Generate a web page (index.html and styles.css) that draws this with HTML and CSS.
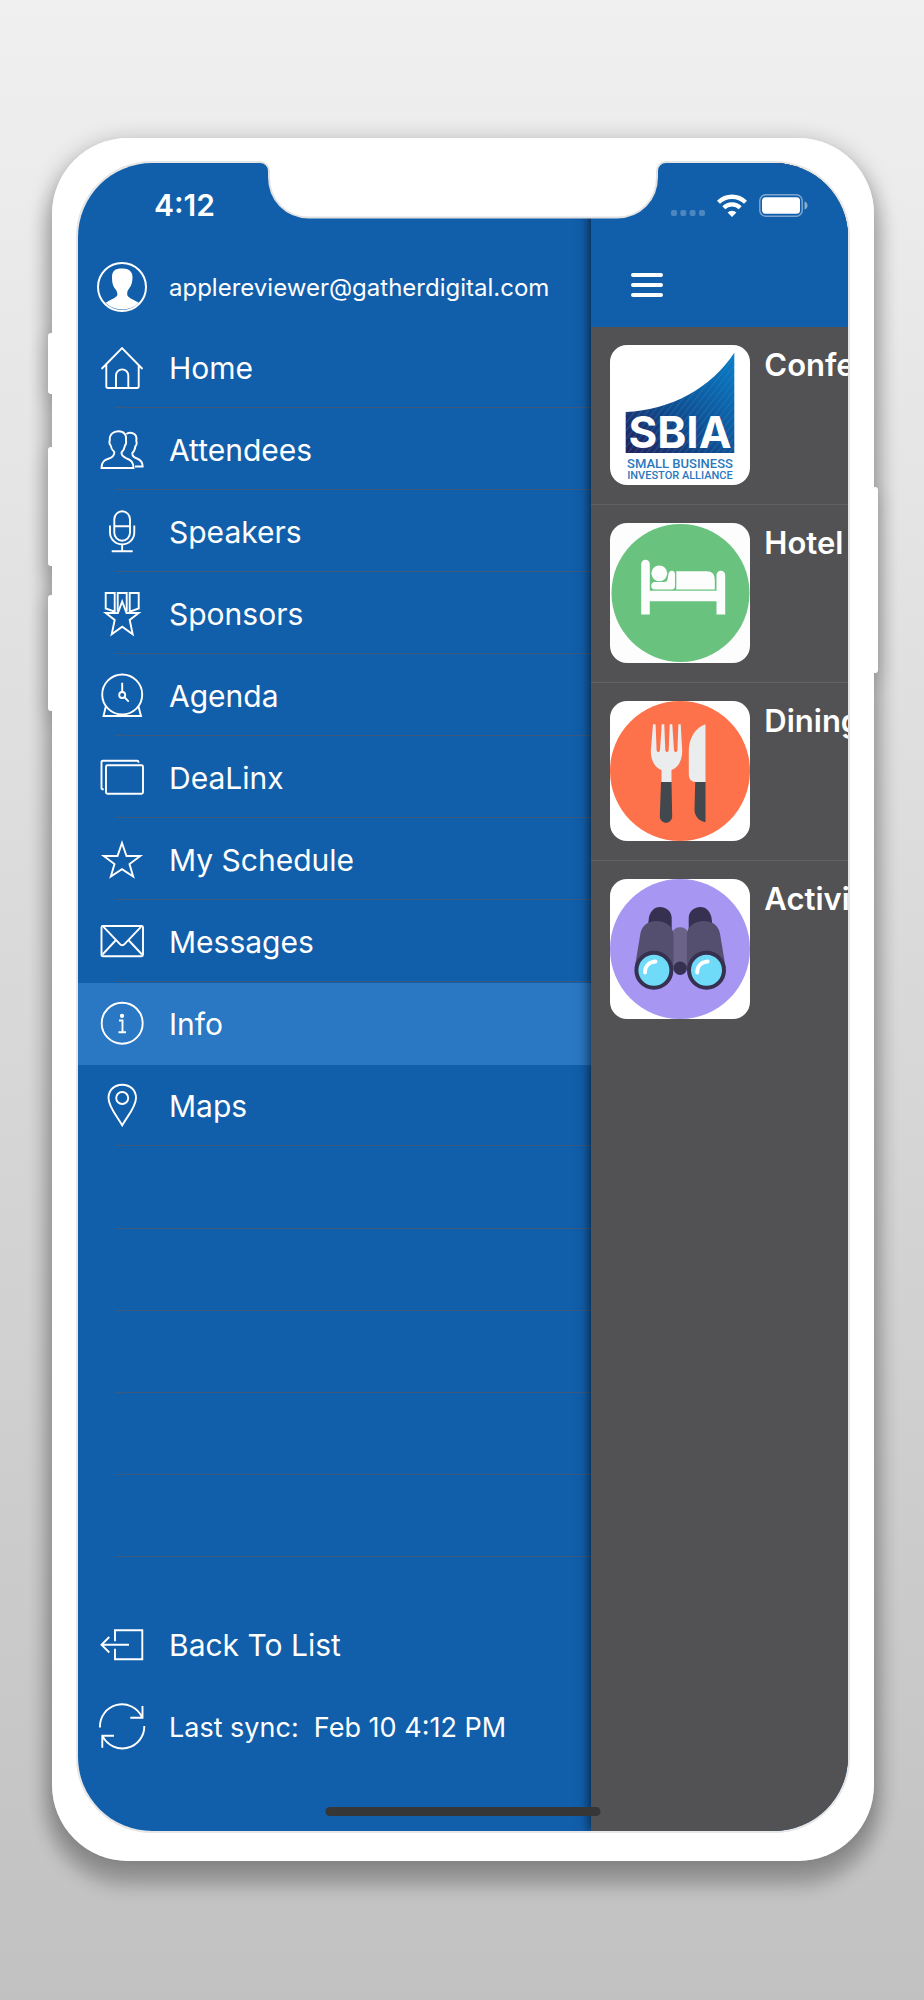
FILE: index.html
```html
<!DOCTYPE html>
<html lang="en">
<head>
<meta charset="utf-8">
<meta name="viewport" content="width=device-width, initial-scale=1">
<title>Info</title>
<link rel="stylesheet" href="styles.css">
</head>
<body>
<div class="device">
  <span class="side-key key-mute"></span>
  <span class="side-key key-up"></span>
  <span class="side-key key-down"></span>
  <span class="side-key key-power"></span>
  <div class="shell">
    <div class="bezel">
      <div class="screen">
        <div class="drawer">
          <div class="clock"><time>4:12</time></div>
          <div class="account">
            <svg class="avatar" viewBox="0 0 50 50" aria-hidden="true">
              <circle cx="25" cy="25" r="24" fill="none" stroke="#fff" stroke-width="2"/>
              <path fill="#fff" d="M25 6.500C31 6 35.500 9 35.500 15C35.500 20 34.500 23 32.500 26C30.500 28.500 30 30 30.300 33C31 35.500 35 37 42 40.700A24 24 0 0 1 8.500 40.700C15 37 19.500 35.500 20.300 33C20.600 30 19.500 28.500 17.500 26C15.500 23 15 20 15 15C15 9 18 6.500 25 6.500Z"/>
            </svg>
            <span class="email">applereviewer@gatherdigital.com</span>
          </div>
          <nav aria-label="Main">
            <ul class="menu">
              <li><a class="item" href="#home"><svg class="icon" viewBox="0 0 44 44" aria-hidden="true"><path d="M1.500 23L22 2L42.500 23M6.300 18.500V40.500Q6.300 42 8 42H37Q38.700 42 38.700 40.500V18.500M16 42V29.500A6.150 6.150 0 0 1 28.300 29.500V42"/></svg>Home</a></li>
              <li><a class="item" href="#attendees"><svg class="icon" viewBox="0 0 44 44" aria-hidden="true"><path d="M1.500 40C1.500 33 5 32 9.500 30.300C13 29 14.500 27 14.300 24C12 22 11 20 10.700 17.500C9.500 16 9 14 9.800 12C9.300 6.500 13 3.300 18.500 3.300C24 3.300 27 7 25.900 12C26.500 14.500 26 16.500 25 17.500C24.500 20.500 23.500 22.500 21.500 24.500C21.300 27.500 23.500 29 26.500 30.300C31 32 33.500 34 33.500 40Z"/><path d="M26.300 6C28 4.500 30 4.500 32 5C36 6 37 9 36.300 13C37 15 36.500 17 35.500 18C35 21 34 23.500 32.300 25C32 28 34 29.500 37 30.500C41 32 42.700 34 42.700 38.500H35"/></svg>Attendees</a></li>
              <li><a class="item" href="#speakers"><svg class="icon" viewBox="0 0 44 44" aria-hidden="true"><rect x="14.300" y="1.300" width="15.700" height="29.400" rx="7.850"/><path d="M14.300 16.300H30M10 15.500V22.500A12.150 11.850 0 0 0 34.300 22.500V15.500M22.150 34.400V41.300M11.700 41.300H32.700"/></svg>Speakers</a></li>
              <li><a class="item" href="#sponsors"><svg class="icon" viewBox="0 0 44 44" aria-hidden="true"><path d="M5.700 1H14.700V19.700L5.700 16.500ZM17.700 19.500V1H26.700V19.500M29.700 1H38.700V16.500L29.700 19.700Z"/><path d="M22.200 9.500L26.500 21H38.700L29.700 28L32.700 42.300L22.200 34.700L11.700 42.300L14.700 28L5.700 21H17.900Z"/></svg>Sponsors</a></li>
              <li><a class="item" href="#agenda"><svg class="icon" viewBox="0 0 44 44" aria-hidden="true"><circle cx="22.200" cy="20.500" r="20"/><circle cx="22.200" cy="21" r="3"/><path d="M22.200 8.700V18M24.400 23.200L28.700 27.700M5.800 32.500L3.500 42H41L38.500 32.500"/></svg>Agenda</a></li>
              <li><a class="item" href="#dealinx"><svg class="icon" viewBox="0 0 44 44" aria-hidden="true"><rect x="6" y="9.300" width="37" height="28.500" rx="1.500"/><path d="M3.700 33.300H3Q1.500 33.300 1.500 32V6Q1.500 4.700 3 4.700H37Q38.500 4.700 38.500 6V6.700"/></svg>DeaLinx</a></li>
              <li><a class="item" href="#schedule"><svg class="icon" viewBox="0 0 44 44" aria-hidden="true"><path d="M22 5L26.500 18H40.300L29.500 26L33.200 38.500L22 31.200L10.800 38.500L14.500 26L3.700 18H17.500Z"/></svg>My Schedule</a></li>
              <li><a class="item" href="#messages"><svg class="icon" viewBox="0 0 44 44" aria-hidden="true"><rect x="1.500" y="6" width="41.500" height="30.300" rx="1.500"/><path d="M3.500 6.800L19.500 23.700Q22.200 26.800 25 23.700L41 6.800M16 20L2.500 34.500M28.400 20L42 34.500"/></svg>Messages</a></li>
              <li><a class="item active" href="#info" aria-current="page"><svg class="icon" viewBox="0 0 44 44" aria-hidden="true"><circle cx="22.200" cy="21.200" r="20.500"/><circle cx="22" cy="13.800" r="1.200" fill="#fff"/><path d="M19 18.500H22.500V30M18.500 30.300H26"/></svg>Info</a></li>
              <li><a class="item" href="#maps"><svg class="icon" viewBox="0 0 44 44" aria-hidden="true"><path d="M22.200 .7C14 .7 8.500 6.500 8.500 14C8.500 23 17 32 22.200 41.300C27.400 32 36 23 36 14C36 6.500 30.400 .7 22.200 .7Z"/><circle cx="22.200" cy="14" r="6"/></svg>Maps</a></li>
              <li class="blank" aria-hidden="true"></li>
              <li class="blank" aria-hidden="true"></li>
              <li class="blank" aria-hidden="true"></li>
              <li class="blank" aria-hidden="true"></li>
              <li class="blank" aria-hidden="true"></li>
            </ul>
          </nav>
          <div class="drawer-footer">
            <a class="item" href="#list"><svg class="icon" viewBox="0 0 44 44" aria-hidden="true"><path d="M15 18.300V7.300H42.300V36.300H15V25.700M29 21.700H1.500M9.300 14L1.500 21.700L9.300 29.500"/></svg>Back To List</a>
            <button class="item sync" type="button"><svg class="icon" viewBox="0 0 44 44" aria-hidden="true"><path d="M0 22.500A22 22 0 0 1 42 12.200M42.500 1V12.700H30.300M44.300 21A22 22 0 0 1 2.600 31.200M2.300 42.700V30.700H14"/></svg><span>Last sync: &nbsp;Feb 10 4:12 PM</span></button>
          </div>
        </div>
        <main class="panel">
          <header class="panel-bar">
            <div class="status">
              <svg width="34" height="7" viewBox="0 0 34 7" fill="#fff" fill-opacity=".26" aria-hidden="true"><rect width="6" height="6" rx="2"/><rect x="9.300" width="6" height="6" rx="2"/><rect x="18.600" width="6" height="6" rx="2"/><rect x="28" width="6" height="6" rx="2"/></svg>
              <svg width="30" height="23" viewBox="0 0 30 23" aria-hidden="true"><g fill="none" stroke="#fff" stroke-width="4.300"><path d="M1.500 8.200A19.500 19.500 0 0 1 28.500 8.200"/><path d="M6.800 13.700A12 12 0 0 1 23.200 13.700"/></g><path fill="#fff" d="M15 23L10.600 18.500A6.300 6.300 0 0 1 19.400 18.500Z"/></svg>
              <svg width="49" height="23" viewBox="0 0 49 23" aria-hidden="true"><rect x=".8" y=".8" width="42.400" height="21.400" rx="6" fill="none" stroke="#fff" stroke-opacity=".45" stroke-width="1.500"/><rect x="3" y="3.300" width="38" height="16.400" rx="3.500" fill="#fff"/><path d="M45.500 7.500C47.500 8 48.500 9.500 48.500 11.500S47.500 15 45.500 15.500Z" fill="#fff" fill-opacity=".5"/></svg>
            </div>
            <button class="menu-toggle" type="button" aria-label="Menu"><span></span><span></span><span></span></button>
          </header>
          <ul class="topics">
            <li><a class="topic" href="#conference">
              <svg class="tile" viewBox="0 0 140 140" aria-hidden="true">
                <defs>
                  <linearGradient id="sail" x1="0" y1="1" x2="1" y2="0"><stop offset="0" stop-color="#241f57"/><stop offset=".4" stop-color="#114a8c"/><stop offset="1" stop-color="#0a7fc9"/></linearGradient>
                  <pattern id="hatch" width="5" height="5" patternUnits="userSpaceOnUse" patternTransform="rotate(38)"><path d="M0 0V5" stroke="#2f8fd4" stroke-width="1.200" stroke-opacity=".55"/></pattern>
                </defs>
                <rect width="140" height="140" fill="#fff"/>
                <path fill="url(#sail)" d="M15.700 67C62 65 102 42 124.300 7.700V108H15.700Z"/>
                <path fill="url(#hatch)" d="M15.700 67C62 65 102 42 124.300 7.700V108H15.700Z"/>
                <text class="logo-name" x="70" y="103" text-anchor="middle">SBIA</text>
                <text class="logo-line" x="70" y="123" text-anchor="middle">SMALL BUSINESS</text>
                <text class="logo-line logo-line-small" x="70" y="134" text-anchor="middle">INVESTOR ALLIANCE</text>
              </svg>
              <span class="topic-title">Conference</span></a></li>
            <li><a class="topic" href="#hotel">
              <svg class="tile" viewBox="0 0 140 140" aria-hidden="true">
                <rect width="140" height="140" fill="#fdfdfd"/><circle cx="70.500" cy="70" r="69" fill="#69c37f"/>
                <g fill="#fdfdfd"><path d="M31.200 91.500V41A4.300 4.300 0 0 1 39.800 41V67.800H106.500V52A4.300 4.300 0 0 1 115.200 52V91.500H106.500V78.300H39.800V91.500Z"/><circle cx="49.300" cy="50.300" r="7.900"/><path d="M45 59H54Q57 59 57.500 56.500L58.500 51C59 46.500 65 46.500 65 51V63Q65 66.500 61.500 66.500H45A3.750 3.750 0 0 1 45 59Z"/><path d="M66.300 48.200H97Q104.800 48.200 104.800 57V66.500H66.300Z"/></g>
              </svg>
              <span class="topic-title">Hotel</span></a></li>
            <li><a class="topic" href="#dining">
              <svg class="tile" viewBox="0 0 140 140" aria-hidden="true">
                <rect width="140" height="140" fill="#fff"/><circle cx="70" cy="70" r="70" fill="#fd724b"/>
                <path fill="#ebecee" d="M43 23.300H45.600L46.600 49.500Q48.300 53 50 49.500L51.700 23.300H54.300L55.300 49.500Q57 53 58.700 49.500L59.700 23.300H62.300L64 49.500Q65.700 53 67.400 49.500L68.400 23.300H70.700L72.200 50C72.200 60 68 66.500 61.500 69V81H51.500V69C45 66.500 40.800 60 40.800 50Z"/>
                <path fill="#41494f" d="M51 81H61.500L62.200 115C62.200 124 49.800 124 49.800 115ZM85.200 81H95.500V121.300C88 120 84.500 114 84.500 109Z"/>
                <path fill="#ebecee" d="M95.500 23.300V81H86Q79 81 78.800 73.500V48C79.500 36 86 26.500 95.500 23.300Z"/>
              </svg>
              <span class="topic-title">Dining</span></a></li>
            <li><a class="topic" href="#activities">
              <svg class="tile" viewBox="0 0 140 140" aria-hidden="true">
                <rect width="140" height="140" fill="#fff"/><circle cx="70" cy="70" r="70" fill="#a797f3"/>
                <path fill="#363150" d="M37.500 50L39 38C41 31 45 28 50 28C57 28 61.700 33 61.700 39V52ZM102.900 50L101.400 38C99.400 31 95.400 28 90.400 28C83.400 28 78.700 33 78.700 39V52Z"/>
                <rect x="62" y="48.300" width="16.400" height="43" rx="7.500" fill="#6b6488"/>
                <path fill="#544f6e" d="M24.700 89L30.500 54C32.500 45.500 39 42 46.500 42C55 42 63.500 47 63.500 56V91ZM115.700 89L109.900 54C107.900 45.500 101.400 42 93.900 42C85.400 42 76.900 47 76.900 56V91Z"/>
                <circle cx="70.200" cy="89.300" r="6.700" fill="#363150"/>
                <circle cx="43.900" cy="91.300" r="17.500" fill="#6fdbf8" stroke="#363150" stroke-width="4"/>
                <circle cx="96.500" cy="91.300" r="17.500" fill="#6fdbf8" stroke="#363150" stroke-width="4"/>
                <path fill="none" stroke="#fff" stroke-width="3.800" stroke-linecap="round" d="M35 93.500C35 87 39 83 45.500 82.500M87.200 93.500C87.200 87 91.200 83 97.700 82.500"/>
              </svg>
              <span class="topic-title">Activities</span></a></li>
          </ul>
        </main>
      </div>
      <svg class="notch" width="412" height="60" viewBox="0 0 412 60" aria-hidden="true">
        <path fill="#fff" d="M3 -1H409V1A9 9 0 0 0 400 10V16C400 39 383 56.500 360 56.500H52C29 56.500 12 39 12 16V10A9 9 0 0 0 3 1Z"/>
        <path fill="none" stroke="#e2e2e2" stroke-width="2" d="M0 1H3A9 9 0 0 1 12 10V16C12 39 29 56.500 52 56.500H360C383 56.500 400 39 400 16V10A9 9 0 0 1 409 1H412"/>
      </svg>
      <span class="home-indicator"></span>
    </div>
  </div>
</div>
</body>
</html>
```
FILE: styles.css
```css
* {
  box-sizing: border-box;
}

body {
  margin: 0;
  min-height: 100vh;
  padding: 138px 50px 139px 52px;
  background: linear-gradient(#f0f0f0, #c1c1c1);
  color: #fff;
  font-family: Inter, "Liberation Sans", sans-serif;
  font-size: 30px;
}

ul {
  margin: 0;
  padding: 0;
  list-style: none;
}

a {
  color: inherit;
  text-decoration: none;
}

button {
  border: 0;
  padding: 0;
  background: none;
  color: inherit;
  font: inherit;
  text-align: left;
}

/* Handset */
.device {
  position: relative;
  isolation: isolate;
  border-radius: 76px;
  box-shadow: 0 20px 18px 6px rgba(0, 0, 0, 0.2), 0 4px 22px 2px rgba(0, 0, 0, 0.22);
}

.shell {
  padding: 23px 24px 28px;
  border-radius: 76px;
  background: #fff;
}

.side-key {
  position: absolute;
  z-index: -1;
  width: 12px;
  border-radius: 3px;
  background: #fff;
  box-shadow: 0 6px 20px rgba(0, 0, 0, 0.16);
}

.key-mute {
  top: 195px;
  left: -4px;
  height: 61px;
}

.key-up {
  top: 309px;
  left: -4px;
  height: 119px;
}

.key-down {
  top: 457px;
  left: -4px;
  height: 116px;
}

.key-power {
  top: 349px;
  right: -4px;
  height: 186px;
}

.bezel {
  position: relative;
  border: 2px solid #e6e6e6;
  border-radius: 76px;
}

.screen {
  display: grid;
  grid-template-columns: 2fr 1fr;
  overflow: hidden;
  border-radius: 74px;
  background: #115eaa;
}

.notch {
  position: absolute;
  top: -2px;
  left: 50%;
  transform: translateX(-50%);
  overflow: visible;
}

.home-indicator {
  position: absolute;
  bottom: 15px;
  left: 50%;
  width: 275px;
  height: 9px;
  border-radius: 5px;
  background: #363636;
  transform: translateX(-50%);
}

/* Drawer */
.drawer {
  min-width: 0;
  padding-bottom: 63px;
}

.clock {
  display: flex;
  align-items: center;
  height: 84px;
  padding-left: 76px;
  font-size: 30px;
  font-weight: 600;
}

.account,
.item {
  display: flex;
  align-items: center;
  gap: 22px;
  width: 100%;
  height: 82px;
  padding-left: 19px;
}

.account {
  height: 80px;
}

.avatar {
  flex: none;
  width: 50px;
  height: 50px;
}

.email {
  font-size: 24px;
}

.icon {
  flex: none;
  width: 44px;
  height: 44px;
  margin: 0 3px;
  overflow: visible;
  fill: none;
  stroke: #fff;
  stroke-width: 1.9;
}

.menu li {
  background: linear-gradient(#3c5a80, #3c5a80) right bottom / calc(100% - 37px) 1px no-repeat;
}

.menu .item:not(.active) {
  height: 81px;
  margin-bottom: 1px;
}

.blank {
  height: 82px;
}

.active {
  background: #2a77c3;
}

.drawer-footer {
  padding-top: 47px;
}

.sync {
  font-size: 27px;
}

/* Topic panel */
.panel {
  position: relative;
  min-width: 0;
  background: #525254;
  box-shadow: 0 0 12px rgba(0, 0, 0, 0.8);
}

.panel-bar {
  height: 164px;
  background: #115eaa;
}

.status {
  display: flex;
  align-items: flex-end;
  justify-content: flex-end;
  gap: 12px;
  height: 54px;
  padding-right: 40px;
}

.menu-toggle {
  display: grid;
  gap: 6px;
  margin: 56px 0 0 40px;
}

.menu-toggle span {
  width: 32px;
  height: 4px;
  border-radius: 2px;
  background: #fff;
}

.topics li + li {
  border-top: 1px solid #626264;
}

.topic {
  display: flex;
  gap: 14px;
  padding: 18px 0 19px 19px;
}

.tile {
  flex: none;
  width: 140px;
  height: 140px;
  border-radius: 17px;
}

.topic-title {
  font-size: 31px;
  font-weight: 600;
  line-height: 39px;
  white-space: nowrap;
}

.logo-name {
  fill: #fff;
  font-size: 44px;
  font-weight: 700;
}

.logo-line {
  fill: #2a78bd;
  font-family: Roboto, sans-serif;
  font-size: 13px;
  font-weight: 500;
}

.logo-line-small {
  font-size: 11px;
}
```
